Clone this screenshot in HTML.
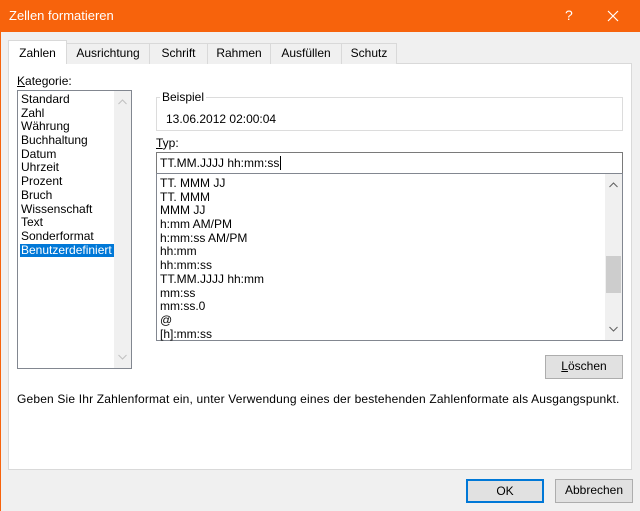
<!DOCTYPE html>
<html><head><meta charset="utf-8"><style>
*{box-sizing:border-box;margin:0;padding:0}
body{width:640px;height:511px;overflow:hidden;background:#f0f0f0;font-family:"Liberation Sans",sans-serif;font-size:12px;color:#000;position:relative}
.a{position:absolute}
.title{left:0;top:0;width:640px;height:32px;background:#f7630c;color:#fff;font-size:13px}
.tab{position:absolute;top:43px;height:21px;background:#f0f0f0;border:1px solid #d9d9d9;border-bottom:none;text-align:center;line-height:19px;font-size:12px}
.panel{left:8px;top:63px;width:624px;height:407px;background:#fff;border:1px solid #d9d9d9}
.list div{height:13.7px;line-height:13.7px;white-space:nowrap}
.btn{position:absolute;background:#e1e1e1;border:1px solid #adadad;text-align:center;line-height:21px}
</style></head><body>
<div class="a title"><span class="a" style="left:9px;top:8px">Zellen formatieren</span><span class="a" style="left:565px;top:7px;font-size:14px">?</span>
<svg class="a" style="left:607px;top:10px" width="12" height="12"><path d="M1 1L11 11M11 1L1 11" stroke="#fff" stroke-width="1.2"/></svg></div>
<div class="a" style="left:0;top:32px;width:1px;height:479px;background:#f7630c"></div>
<div class="a panel"></div>
<div class="tab" style="left:66px;width:84px">Ausrichtung</div>
<div class="tab" style="left:149px;width:59px">Schrift</div>
<div class="tab" style="left:207px;width:64px">Rahmen</div>
<div class="tab" style="left:270px;width:72px">Ausfüllen</div>
<div class="tab" style="left:341px;width:56px">Schutz</div>
<div class="tab" style="left:8px;top:40px;width:59px;height:24px;background:#fff;line-height:24px">Zahlen</div>
<div class="a" style="left:17px;top:74px"><u>K</u>ategorie:</div>
<div class="a list" style="left:17px;top:90px;width:115px;height:279px;border:1px solid #828790;padding:2px 0 0 3px">
<div>Standard</div><div>Zahl</div><div>Währung</div><div>Buchhaltung</div><div>Datum</div><div>Uhrzeit</div><div>Prozent</div><div>Bruch</div><div>Wissenschaft</div><div>Text</div><div>Sonderformat</div><div style="background:#0078d7;color:#fff;margin-left:-1px;padding-left:1px;width:106px">Benutzerdefiniert</div>
<div class="a" style="right:0;top:0;width:17px;height:277px;background:#f0f0f0"></div>
<svg class="a" style="right:4px;top:8px" width="9" height="6"><path d="M0.5 5L4.5 1L8.5 5" stroke="#c0c0c0" fill="none"/></svg>
<svg class="a" style="right:4px;bottom:8px" width="9" height="6"><path d="M0.5 1L4.5 5L8.5 1" stroke="#c0c0c0" fill="none"/></svg>
</div>
<div class="a" style="left:156px;top:97px;width:467px;height:34px;border:1px solid #dcdcdc"></div>
<div class="a" style="left:160px;top:90px;background:#fff;padding:0 2px">Beispiel</div>
<div class="a" style="left:166px;top:112px">13.06.2012 02:00:04</div>
<div class="a" style="left:156px;top:136px"><u>T</u>yp:</div>
<div class="a" style="left:156px;top:152px;width:467px;height:22px;border:1px solid #7a7a7a;padding:3px 0 0 3px">TT.MM.JJJJ hh:mm:ss<span style="border-left:1px solid #000;margin-left:1px"></span></div>
<div class="a list" style="left:156px;top:173px;width:467px;height:168px;border:1px solid #828790;padding:3px 0 0 3px">
<div>TT. MMM JJ</div><div>TT. MMM</div><div>MMM JJ</div><div>h:mm AM/PM</div><div>h:mm:ss AM/PM</div><div>hh:mm</div><div>hh:mm:ss</div><div>TT.MM.JJJJ hh:mm</div><div>mm:ss</div><div>mm:ss.0</div><div>@</div><div>[h]:mm:ss</div>
<div class="a" style="right:0;top:0;width:17px;height:166px;background:#f0f0f0"></div>
<div class="a" style="right:1px;top:82px;width:15px;height:37px;background:#cdcdcd"></div>
<svg class="a" style="right:4px;top:8px" width="9" height="6"><path d="M0.5 5L4.5 1L8.5 5" stroke="#606060" fill="none"/></svg>
<svg class="a" style="right:4px;bottom:8px" width="9" height="6"><path d="M0.5 1L4.5 5L8.5 1" stroke="#606060" fill="none"/></svg>
</div>
<div class="btn" style="left:545px;top:355px;width:78px;height:24px"><u>L</u>öschen</div>
<div class="a" style="left:17px;top:392px;letter-spacing:0.17px">Geben Sie Ihr Zahlenformat ein, unter Verwendung eines der bestehenden Zahlenformate als Ausgangspunkt.</div>
<div class="btn" style="left:466px;top:479px;width:78px;height:24px;border:2px solid #0078d7;line-height:20px">OK</div>
<div class="btn" style="left:555px;top:479px;width:78px;height:24px">Abbrechen</div>
</body></html>
